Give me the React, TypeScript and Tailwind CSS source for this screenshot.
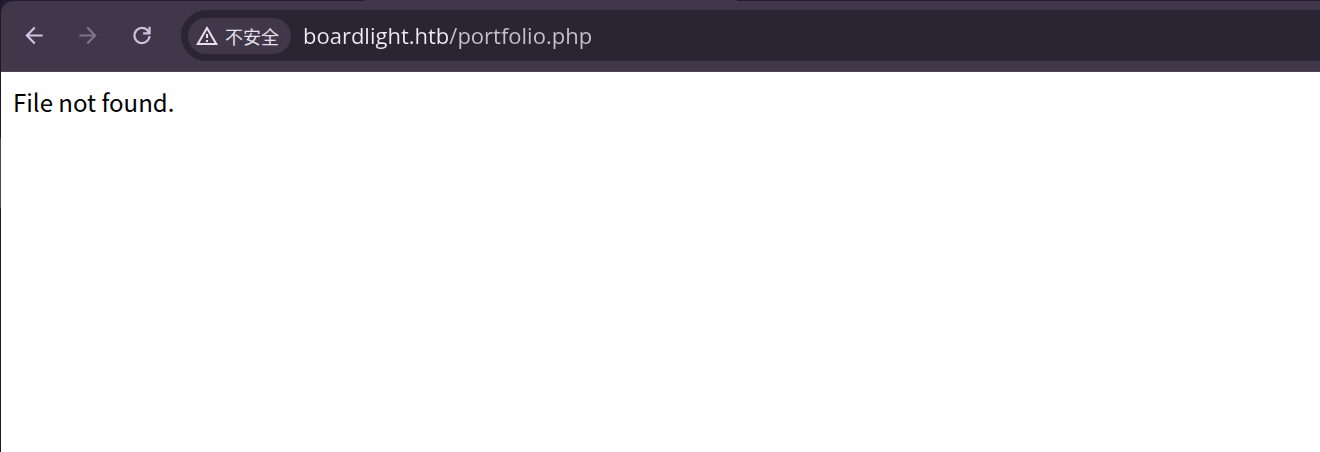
import React, { useState } from 'react';

interface ToolbarButtonProps {
  label: string;
  path: string;
  className?: string;
  disabled?: boolean;
}

const ToolbarButton: React.FC<ToolbarButtonProps> = ({ label, path, className = 'text-[#d0c1e2]', disabled }) => (
  <button
    type="button"
    aria-label={label}
    disabled={disabled}
    className={`w-[54px] h-[51px] flex items-center justify-center ${className}`}
  >
    <svg viewBox="0 0 24 24" className="w-[26px] h-[27px]" fill="currentColor" aria-hidden="true">
      <path d={path} />
    </svg>
  </button>
);

export default function App() {
  const [url, setUrl] = useState('boardlight.htb/portfolio.php');

  return (
    <div className="min-h-screen flex bg-white">
      {/* window edge */}
      <div className="w-px shrink-0 flex flex-col bg-[#1d1b20]">
        <div className="h-[138px]" />
        <div className="h-[70px] bg-[#4b4a4c]" />
      </div>

      <div className="flex-1 min-w-0 flex flex-col">
        <header className="bg-[#241c30]">
          {/* bottom edge of the active tab */}
          <div className="h-px pl-[364px]">
            <div className="h-px w-[372px] bg-[#40374b]" />
          </div>

          <div className="flex items-center h-[71px] pl-[6px] pb-px rounded-tl-xl bg-[#40374b] border-b border-[#4a4350]">
            <nav className="flex">
              <ToolbarButton label="返回" path="M20 11H7.83l5.59-5.59L12 4l-8 8 8 8 1.41-1.41L7.83 13H20z" />
              <ToolbarButton
                label="前进"
                path="M12 4l-1.41 1.41L16.17 11H4v2h12.17l-5.58 5.59L12 20l8-8z"
                className="text-[#7f7588]"
                disabled
              />
              <ToolbarButton
                label="重新加载"
                path="M12 20A8 8 0 0 1 12 4c2.4 0 4.5 1 6 2.75V4h2v7h-7V9h4.2A6 6 0 1 0 18 12.5h2A8 8 0 0 1 12 20z"
              />
            </nav>

            <div className="flex-1 min-w-0 h-[51px] ml-3 pl-[7px] flex items-center bg-[#2b2433] rounded-l-full">
              <button
                type="button"
                className="h-9 pl-[7px] pr-3 shrink-0 flex items-center gap-1.5 rounded-full bg-[#40374b] text-[#e6e0ea]"
              >
                <svg viewBox="0 0 24 24" className="w-6 h-6" fill="currentColor" aria-hidden="true">
                  <path d="M12 5.99L19.53 19H4.47L12 5.99M12 2L1 21h22L12 2zm1 14h-2v2h2v-2zm0-6h-2v4h2v-4z" />
                </svg>
                <span className="text-[18px] leading-6 font-['Noto_Sans_CJK_SC',sans-serif]">不安全</span>
              </button>
              {/* host is brighter than the path */}
              <input
                type="text"
                aria-label="地址栏"
                spellCheck={false}
                value={url}
                onChange={(e) => setUrl(e.target.value)}
                className="flex-1 min-w-0 h-9 ml-3 pb-0.5 outline-none text-[22px] font-['Open_Sans',sans-serif] text-transparent caret-white bg-clip-text bg-[linear-gradient(90deg,#f0ebf4_145px,#c8c1cf_145px)]"
              />
            </div>
          </div>
        </header>

        <main className="px-3 py-3">
          <p className="text-[24px] leading-9 text-black font-['Noto_Sans_CJK_SC',sans-serif]">File not found.</p>
        </main>
      </div>
    </div>
  );
}
